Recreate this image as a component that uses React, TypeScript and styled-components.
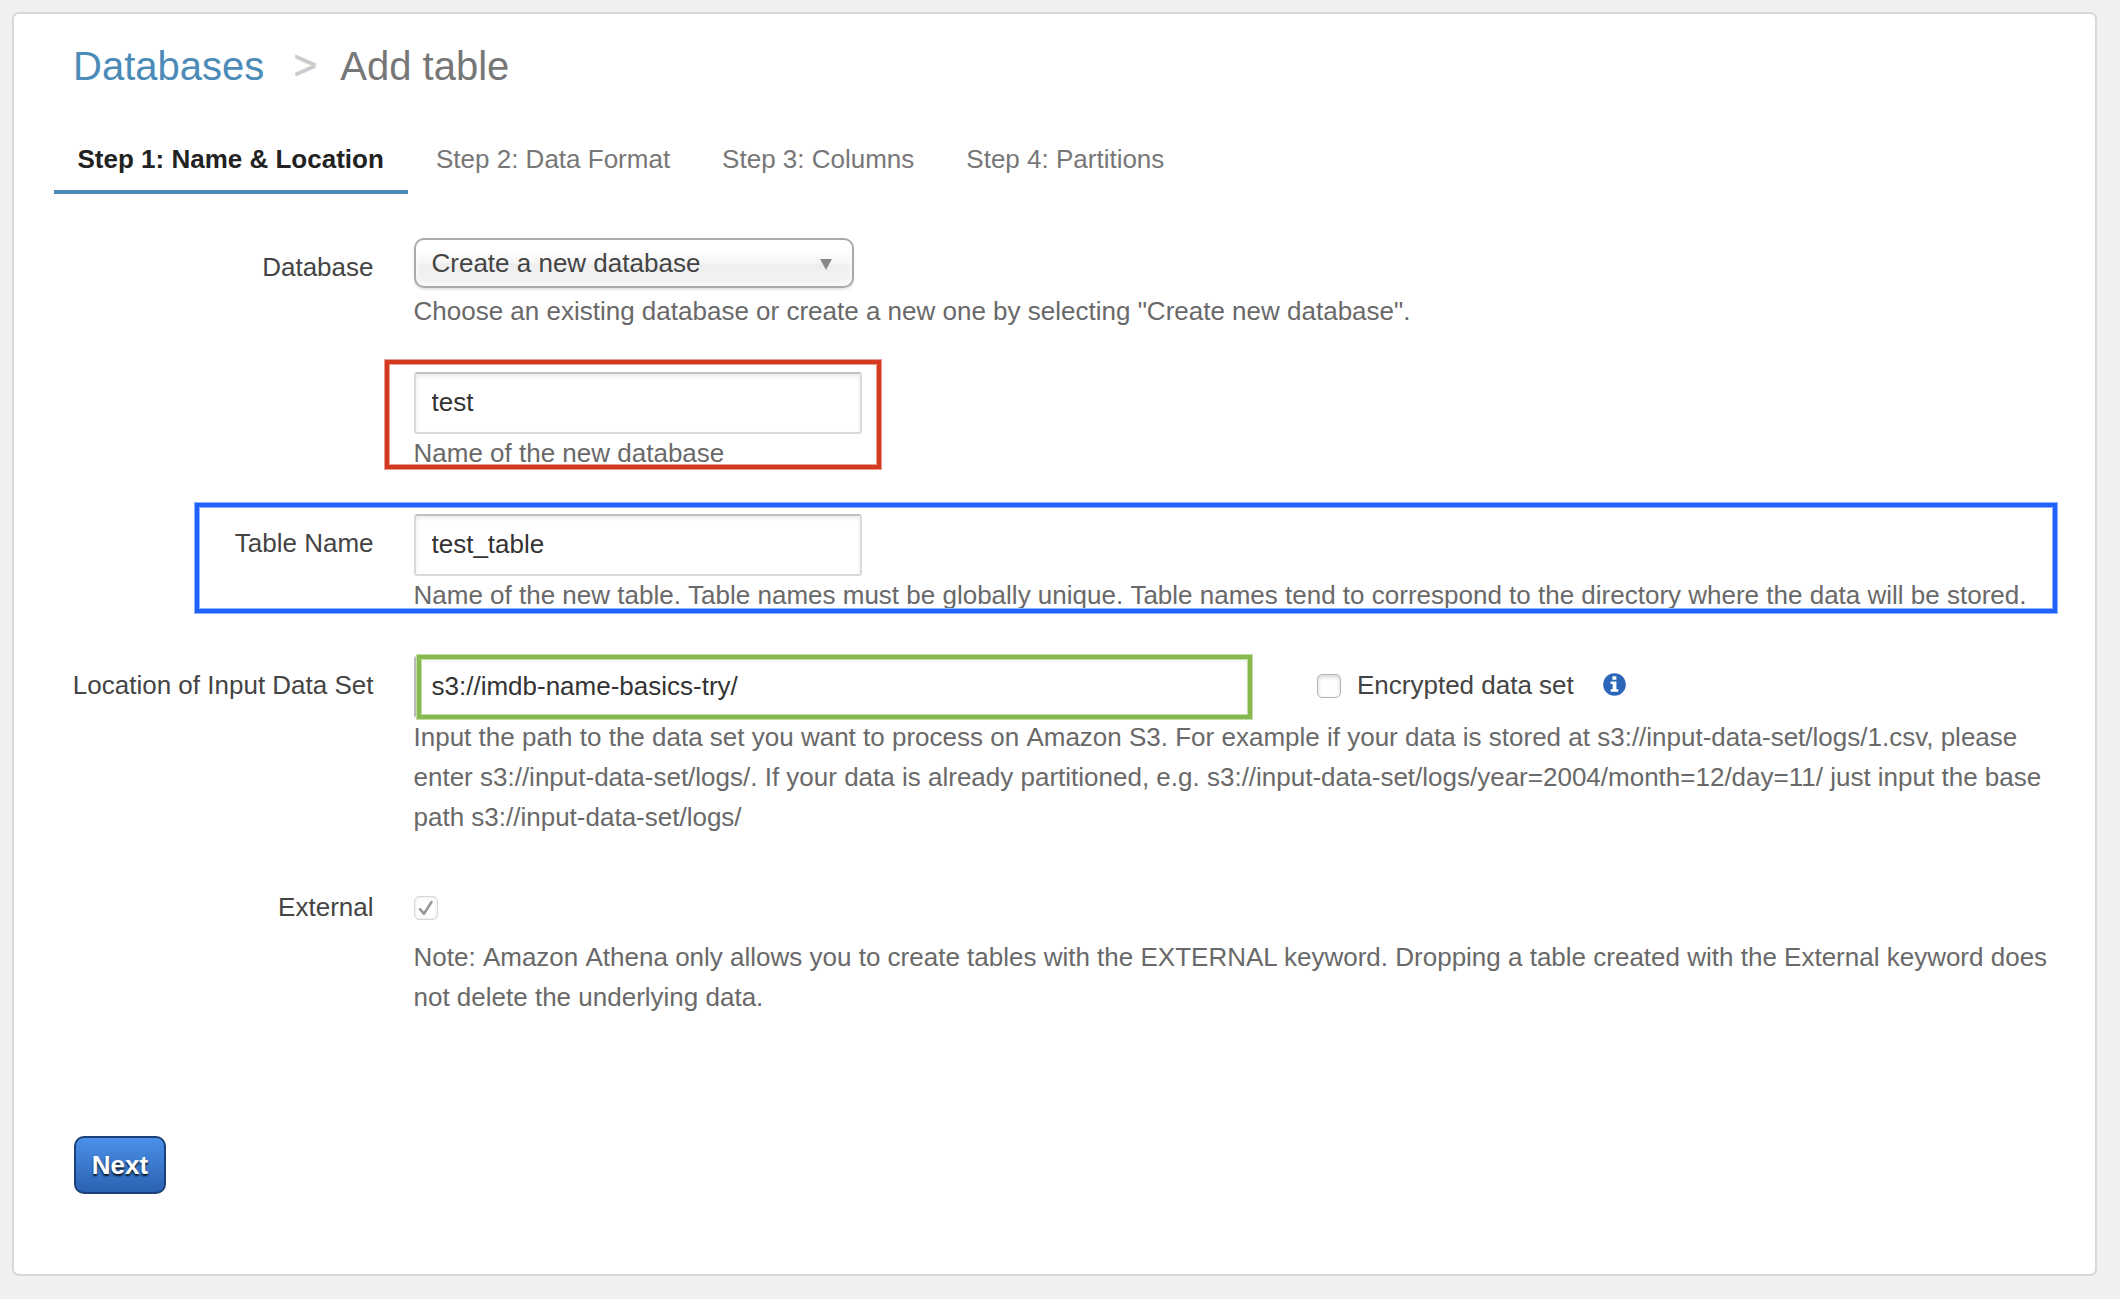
import React from "react";
import styled, { createGlobalStyle, css } from "styled-components";

const GlobalStyle = createGlobalStyle`
  *, *::before, *::after { box-sizing: border-box; }
  body {
    margin: 0;
    background: #f0f0f0;
    font-family: "Liberation Sans", Arial, Helvetica, sans-serif;
    font-size: 26px;
    line-height: 40px;
    color: #444;
  }
`;

const Page = styled.div`
  width: 2120px;
  height: 1299px;
  padding: 12px 23px 23px 12px;
  overflow: hidden;
`;

const Card = styled.main`
  height: 1264px;
  padding: 27px 38px 0 58px;
  background: #fff;
  border: 2px solid #d8d8d8;
  border-radius: 7px;
`;

const Breadcrumb = styled.nav`
  display: flex;
  align-items: baseline;
  gap: 29.5px;
  height: 50px;
  padding-left: 1px;
  font-size: 40px;
  line-height: 50px;
  color: #777;
`;

const CrumbLink = styled.a`
  color: #4b8bb8;
`;

const Separator = styled.span`
  width: 17px;
  color: #ccc;
  -webkit-text-stroke: 0.8px #ccc;
  transform: translateY(-1px);
`;

const Tabs = styled.ul`
  display: flex;
  gap: 3px;
  margin: 48px 0 0 -18px;
  padding: 0;
  list-style: none;
`;

const Tab = styled.li<{ $active?: boolean }>`
  height: 55px;
  padding: 0 24.5px;
  white-space: nowrap;
  color: #777;
  border-bottom: 4px solid transparent;
  ${(p) =>
    p.$active &&
    css`
      width: 354px;
      padding: 0 0 0 23.5px;
      margin-right: 0.5px;
      font-weight: bold;
      color: #222;
      border-bottom-color: #4b8bb5;
    `}
`;

const Form = styled.form`
  display: flex;
  flex-direction: column;
  gap: 41px;
  margin-top: 44px;
`;

const Row = styled.div`
  position: relative;
  display: grid;
  grid-template-columns: 302px 1643px;
  column-gap: 40px;
`;

const Label = styled.label`
  padding: 9px 0.5px 0 0;
  text-align: right;
  white-space: nowrap;
`;

const Field = styled.div`
  display: flex;
  flex-direction: column;
  align-items: flex-start;
`;

const Line = styled.div`
  display: flex;
`;

const Help = styled.p<{ $offset?: number }>`
  margin: ${(p) => p.$offset ?? -1}px 0 0 -0.5px;
  color: #696969;
`;

/* Keeps the full word gap, which kerning would narrow before a capital. */
const Word = styled.span`
  display: inline-block;
`;

const Select = styled.div`
  display: flex;
  justify-content: space-between;
  align-items: center;
  width: 440px;
  height: 50px;
  padding: 0 20px 0 15.5px;
  border: 2px solid #aaa;
  border-radius: 10px;
  background: linear-gradient(#fff 20%, #f6f6f6 50%, #eee 52%, #f4f4f4 100%);
  box-shadow: inset 0 0 6px #fff, 0 2px 2px rgba(0, 0, 0, 0.1);
`;

const Caret = styled.span`
  border: 6px solid transparent;
  border-top: 11px solid #888;
  border-bottom: 0;
  margin-top: 2px;
`;

const Input = styled.input<{ $width?: number }>`
  width: ${(p) => p.$width ?? 448}px;
  height: 62px;
  padding: 0 15.5px 2px;
  border: 2px solid #d9d9d9;
  border-top-color: #c0c0c0;
  border-left-color: ${(p) => (p.$width ? "#b9b9b9" : "#d9d9d9")};
  border-radius: 3px;
  outline: 0;
  background: #fff;
  box-shadow: inset 0 2px 4px rgba(0, 0, 0, 0.09);
  font: inherit;
  color: #333;
`;

const Highlight = styled.div<{
  $color: string;
  $halo: string;
  $x: number;
  $y: number;
  $w: number;
  $h: number;
}>`
  position: absolute;
  pointer-events: none;
  left: ${(p) => p.$x}px;
  top: ${(p) => p.$y}px;
  width: ${(p) => p.$w}px;
  height: ${(p) => p.$h}px;
  border: 4px solid ${(p) => p.$color};
  box-shadow: 0 0 0 1px ${(p) => p.$halo}, inset 0 0 0 1px ${(p) => p.$halo};
`;

const Check = styled.span<{ $disabled?: boolean }>`
  display: flex;
  align-items: center;
  justify-content: center;
  width: 24px;
  height: 24px;
  margin-top: 18px;
  border: 1.5px solid ${(p) => (p.$disabled ? "#d6d6d6" : "#b4b4b4")};
  border-radius: 5px;
  background: #fff;
  box-shadow: ${(p) =>
    p.$disabled
      ? "inset 0 0 4px rgba(0,0,0,.1)"
      : "inset 0 2px 4px rgba(0,0,0,.18)"};
`;

const Encrypted = styled.div`
  display: flex;
  margin-left: 67px;
`;

const EncryptedText = styled.span`
  padding: 9px 0 0 16px;
  white-space: nowrap;
`;

const InfoIcon = styled.svg`
  width: 23px;
  height: 23px;
  margin: 17px 0 0 29px;
`;

const CheckNote = styled(Help)`
  margin-top: 17px;
`;

const NextButton = styled.button`
  display: block;
  width: 92px;
  height: 58px;
  margin: 119px 0 0 2px;
  padding: 0;
  border: 2px solid #1c4078;
  border-radius: 10px;
  background: linear-gradient(#4b90e8, #2a62b2);
  font: bold 26px "Liberation Sans", Arial, sans-serif;
  color: #fff;
  text-shadow: 0 2px 2px rgba(0, 0, 0, 0.85);
`;

export default function App() {
  return (
    <Page>
      <GlobalStyle />
      <Card>
        <Breadcrumb>
          <CrumbLink>Databases</CrumbLink>
          <Separator>&gt;</Separator>
          <span>Add table</span>
        </Breadcrumb>
        <Tabs>
          <Tab $active>Step 1: Name &amp; Location</Tab>
          <Tab>Step 2: Data Format</Tab>
          <Tab>Step 3: Columns</Tab>
          <Tab>Step 4: Partitions</Tab>
        </Tabs>
        <Form onSubmit={(e) => e.preventDefault()}>
          <Row>
            <Label>Database</Label>
            <Field>
              <Select>
                <span>Create a new database</span>
                <Caret />
              </Select>
              <Help $offset={3}>
                Choose an existing database or create a new one by selecting
                "Create new database".
              </Help>
            </Field>
          </Row>
          <Row>
            <Label />
            <Field>
              <Input defaultValue="test" />
              <Help>Name of the new database</Help>
            </Field>
            <Highlight $color="#d33a20" $halo="#e99d90" $x={313} $y={-12} $w={496} $h={109} />
          </Row>
          <Row>
            <Label>Table Name</Label>
            <Field>
              <Input defaultValue="test_table" />
              <Help>
                Name of the new table. <Word>Table</Word> names must be globally
                unique. <Word>Table</Word> names tend to correspond to the
                directory where the data will be stored.
              </Help>
            </Field>
            <Highlight $color="#1f62fa" $halo="#8fb1fd" $x={123} $y={-11} $w={1862} $h={110} />
          </Row>
          <Row>
            <Label>Location of Input Data Set</Label>
            <Field>
              <Line>
                <Input $width={836} defaultValue="s3://imdb-name-basics-try/" />
                <Encrypted>
                  <Check />
                  <EncryptedText>Encrypted data set</EncryptedText>
                  <InfoIcon viewBox="0 0 23 23">
                    <circle cx="11.5" cy="11.5" r="11.3" fill="#2b66b8" />
                    <path
                      d="M9.4 3.2h4v3.6h-4zM7.6 8.4h5.8v7.8h1.9v2.6H7.6v-2.6h2v-5.2h-2z"
                      fill="#fff"
                    />
                  </InfoIcon>
                </Encrypted>
              </Line>
              <Help>
                Input the path to the data set you want to process on{" "}
                <Word>Amazon</Word> S3. For example if your data is stored at
                s3://input-data-set/logs/1.csv, please enter
                s3://input-data-set/logs/. If your data is already partitioned,
                e.g. s3://input-data-set/logs/year=2004/month=12/day=11/ just
                input the base path s3://input-data-set/logs/
              </Help>
            </Field>
            <Highlight $color="#86b950" $halo="#c3dca8" $x={345} $y={-1} $w={835} $h={64} />
          </Row>
          <Row>
            <Label>External</Label>
            <Field>
              <Check $disabled>
                <svg width="16" height="18" viewBox="0 0 16 18">
                  <path
                    d="M2 10.2l4 4.6L13.5 3"
                    fill="none"
                    stroke="#999"
                    strokeWidth="2.6"
                    strokeLinecap="round"
                    strokeLinejoin="round"
                  />
                </svg>
              </Check>
              <CheckNote>
                Note: <Word>Amazon</Word> <Word>Athena</Word> only allows you to
                create tables with the EXTERNAL keyword. Dropping a table
                created with the External keyword does not delete the
                underlying data.
              </CheckNote>
            </Field>
          </Row>
        </Form>
        <NextButton type="button">Next</NextButton>
      </Card>
    </Page>
  );
}
